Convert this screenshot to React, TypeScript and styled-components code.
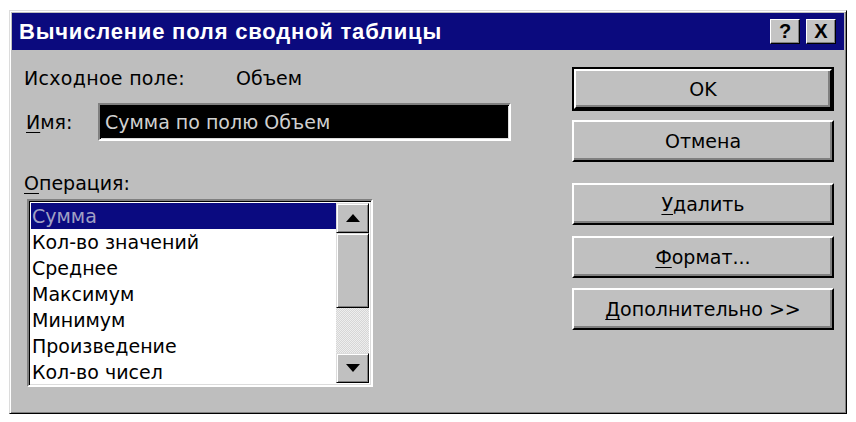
import React from "react";
import styled, { createGlobalStyle } from "styled-components";

const Global = createGlobalStyle`
  html, body { margin: 0; padding: 0; background: #ffffff; }
  body { font-family: "DejaVu Sans", Verdana, sans-serif; }
  * { box-sizing: border-box; }
`;

const Window = styled.div`
  margin: 10px 0 0 9px;
  width: 838px;
  height: 404px;
  background: #bebebe;
  border: 1px solid;
  border-color: #dcdcdc #000 #000 #dcdcdc;
  box-shadow: inset 1px 1px #ffffff, inset -1px -1px #808080;
  padding: 2px;
  display: flex;
  flex-direction: column;
`;

const TitleBar = styled.div`
  height: 37px;
  background: #0b0a7e;
  display: flex;
  align-items: center;
  justify-content: space-between;
  padding: 0 8px 0 7px;
`;

const TitleText = styled.div`
  color: #ffffff;
  font-family: "Liberation Sans", Arial, sans-serif;
  font-weight: bold;
  font-size: 22px;
  letter-spacing: 0.8px;
`;

const TitleButtons = styled.div`
  display: flex;
  gap: 6px;
`;

const TitleButton = styled.div`
  width: 30px;
  height: 25px;
  background: #c4c4c4;
  border: 1px solid;
  border-color: #ffffff #000 #000 #ffffff;
  box-shadow: inset -1px -1px #808080;
  display: flex;
  align-items: center;
  justify-content: center;
  font-family: "Liberation Sans", Arial, sans-serif;
  font-weight: bold;
  font-size: 20px;
  color: #000;
`;

const Body = styled.div`
  flex: 1;
  display: flex;
  padding: 17px 0 0 12px;
`;

const LeftCol = styled.div`
  flex: 0 0 548px;
  display: flex;
  flex-direction: column;
`;

const RightCol = styled.div`
  flex: 0 0 262px;
  display: flex;
  flex-direction: column;
`;

const Text = styled.div`
  font-size: 19px;
  color: #000;
  line-height: 22px;
  height: 22px;
  white-space: nowrap;
`;

const SourceRow = styled.div`
  display: flex;
`;

const SourceLabel = styled(Text)`
  width: 212px;
  letter-spacing: 0.3px;
`;

const NameRow = styled.div`
  display: flex;
  align-items: center;
  margin-top: 14px;
  height: 38px;
`;

const NameLabel = styled(Text)`
  width: 74px;
  padding-left: 2px;
`;

const Input = styled.div`
  width: 413px;
  height: 38px;
  border: 2px solid;
  border-color: #808080 #ffffff #ffffff #808080;
  box-shadow: inset 1px 1px #000, inset -1px -1px #dcdcdc;
  background: #000;
  padding: 0 5px;
  display: flex;
  align-items: center;
  color: #d0d0d0;
  font-size: 19px;
  white-space: nowrap;
`;

const OpLabel = styled(Text)`
  margin-top: 31px;
`;

const ListBox = styled.div`
  margin: 5px 0 0 3px;
  width: 346px;
  height: 188px;
  border: 2px solid;
  border-color: #808080 #ffffff #ffffff #808080;
  box-shadow: inset 1px 1px #000, inset -1px -1px #dcdcdc;
  background: #ffffff;
  padding: 2px;
  display: flex;
`;

const Items = styled.div`
  flex: 1;
  display: flex;
  flex-direction: column;
`;

const Item = styled.div<{ $selected?: boolean }>`
  height: 26px;
  line-height: 26px;
  padding-left: 1px;
  font-size: 19px;
  white-space: nowrap;
  background: ${(p) => (p.$selected ? "#0a0a80" : "transparent")};
  color: ${(p) => (p.$selected ? "#a0a0c4" : "#000")};
`;

const ScrollBar = styled.div`
  width: 33px;
  display: flex;
  flex-direction: column;
`;

const Bevel = styled.div`
  background: #c0c0c0;
  border: 1px solid;
  border-color: #dcdcdc #000 #000 #dcdcdc;
  box-shadow: inset 1px 1px #ffffff, inset -1px -1px #808080;
`;

const ArrowButton = styled(Bevel)`
  height: 30px;
  display: flex;
  align-items: center;
  justify-content: center;
`;

const Thumb = styled(Bevel)`
  height: 75px;
`;

const Track = styled.div`
  flex: 1;
  background-color: #e4e4e4;
  background-image: repeating-conic-gradient(#d6d6d6 0 25%, #eeeeee 0 50%);
  background-size: 2px 2px;
`;

const Button = styled.div<{ $default?: boolean; $gap: number }>`
  margin-top: ${(p) => p.$gap}px;
  height: ${(p) => (p.$default ? 44 : 42)}px;
  background: #c0c0c0;
  border: ${(p) => (p.$default ? "2px solid #000" : "none")};
  display: flex;
`;

const ButtonFace = styled.div`
  flex: 1;
  border: 2px solid;
  border-color: #ffffff #000 #000 #ffffff;
  box-shadow: inset -2px -2px #808080;
  display: flex;
  align-items: center;
  justify-content: center;
  font-size: 19px;
  color: #000;
  white-space: nowrap;
`;

const Key = styled.span`
  text-decoration: underline;
  text-underline-offset: 3px;
`;

const Arrow = ({ up }: { up?: boolean }) => (
  <svg width="14" height="8" viewBox="0 0 14 8">
    <polygon points={up ? "7,0 14,8 0,8" : "0,0 14,0 7,8"} fill="#000" />
  </svg>
);

const items = [
  "Сумма",
  "Кол-во значений",
  "Среднее",
  "Максимум",
  "Минимум",
  "Произведение",
  "Кол-во чисел",
];

export default function App() {
  return (
    <>
      <Global />
      <Window>
        <TitleBar>
          <TitleText>Вычисление поля сводной таблицы</TitleText>
          <TitleButtons>
            <TitleButton>?</TitleButton>
            <TitleButton>X</TitleButton>
          </TitleButtons>
        </TitleBar>
        <Body>
          <LeftCol>
            <SourceRow>
              <SourceLabel>Исходное поле:</SourceLabel>
              <Text>Объем</Text>
            </SourceRow>
            <NameRow>
              <NameLabel>
                <Key>И</Key>мя:
              </NameLabel>
              <Input>Сумма по полю Объем</Input>
            </NameRow>
            <OpLabel>
              <Key>О</Key>перация:
            </OpLabel>
            <ListBox>
              <Items>
                {items.map((it, i) => (
                  <Item key={it} $selected={i === 0}>
                    {it}
                  </Item>
                ))}
              </Items>
              <ScrollBar>
                <ArrowButton>
                  <Arrow up />
                </ArrowButton>
                <Thumb />
                <Track />
                <ArrowButton>
                  <Arrow />
                </ArrowButton>
              </ScrollBar>
            </ListBox>
          </LeftCol>
          <RightCol>
            <Button $default $gap={0}>
              <ButtonFace>OK</ButtonFace>
            </Button>
            <Button $gap={9}>
              <ButtonFace>Отмена</ButtonFace>
            </Button>
            <Button $gap={21}>
              <ButtonFace>
                <Key>У</Key>далить
              </ButtonFace>
            </Button>
            <Button $gap={11}>
              <ButtonFace>
                <Key>Ф</Key>ормат...
              </ButtonFace>
            </Button>
            <Button $gap={10}>
              <ButtonFace>
                <Key>Д</Key>ополнительно &gt;&gt;
              </ButtonFace>
            </Button>
          </RightCol>
        </Body>
      </Window>
    </>
  );
}
